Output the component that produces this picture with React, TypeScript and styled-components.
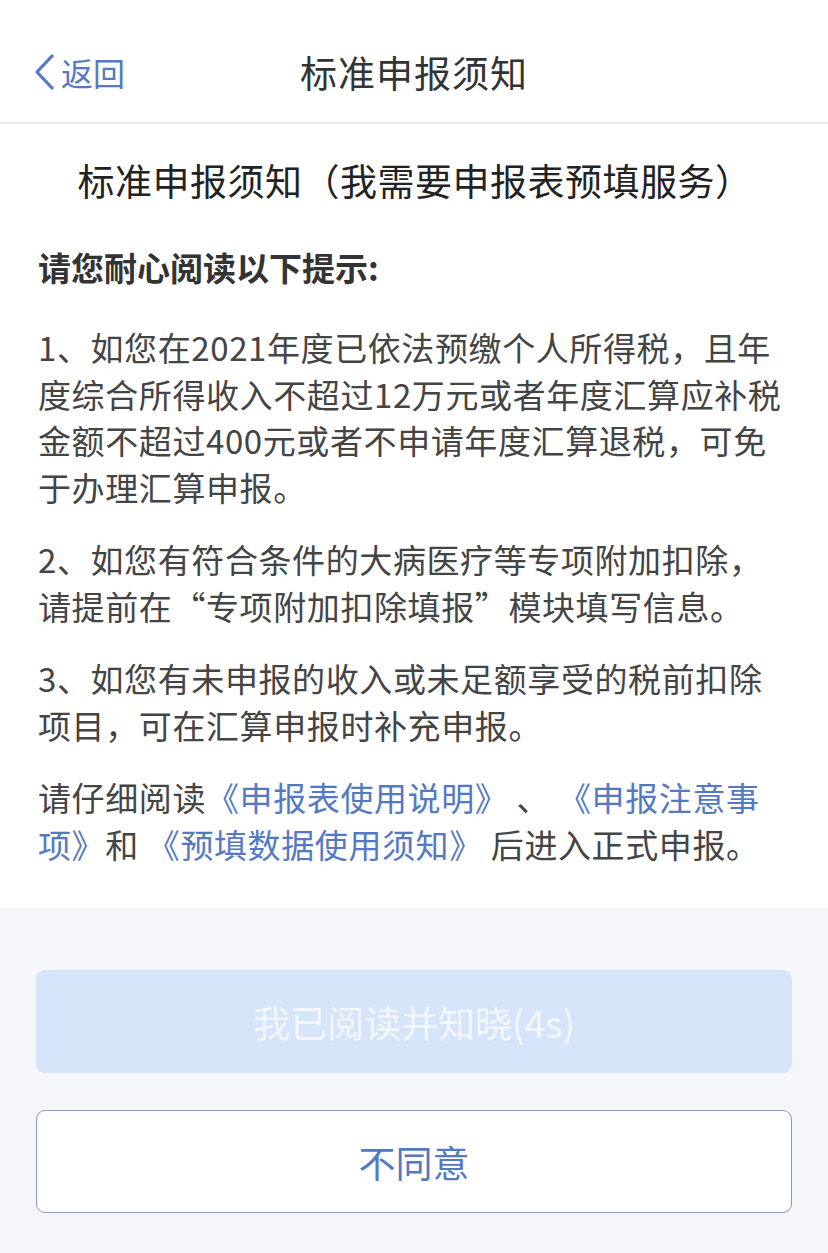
import React from "react";
import styled, { createGlobalStyle } from "styled-components";

const BLUE = "#5479c2";
const TEXT = "#444";

const GlobalStyle = createGlobalStyle`
    html, body {
        margin: 0;
        padding: 0;
        background: #f4f6f9;
    }
    body {
        font-family: "Noto Sans CJK SC", "Noto Sans", sans-serif;
        -webkit-font-smoothing: antialiased;
    }
`;

const Page = styled.div`
    width: 828px;
    min-height: 1253px;
    display: flex;
    flex-direction: column;
    background: #f4f6f9;
`;

const NavBar = styled.div`
    height: 98px;
    padding-top: 24px;
    display: grid;
    grid-template-columns: 1fr auto 1fr;
    align-items: center;
    background: #fff;
    border-bottom: 2px solid #e9e9ec;
    box-sizing: content-box;
`;

const BackButton = styled.div`
    display: flex;
    align-items: center;
    gap: 6px;
    padding-left: 33px;
    color: ${BLUE};
    font-size: 32px;
    line-height: 1;
    padding-bottom: 2px;
`;

const NavTitle = styled.div`
    font-size: 37px;
    color: #333;
    letter-spacing: 1px;
    padding-bottom: 2px;
`;

const Content = styled.div`
    background: #fff;
    padding: 31px 36px 41px 38px;
    display: flex;
    flex-direction: column;
`;

const DocTitle = styled.h1`
    margin: 0 0 39px;
    font-size: 37px;
    font-weight: 400;
    line-height: 50px;
    color: #222;
    text-align: center;
    letter-spacing: 0.5px;
`;

const Heading = styled.h2`
    margin: 0 0 34px;
    font-size: 33px;
    font-weight: 700;
    line-height: 46px;
    color: #333;
`;

const Paragraph = styled.p`
    margin: 0 0 26px;
    font-size: 33px;
    line-height: 46.5px;
    color: ${TEXT};
    letter-spacing: 0.6px;
    white-space: nowrap;

    &:last-child {
        margin-bottom: 0;
    }
`;

const DocLink = styled.span`
    color: ${BLUE};
`;

const Footer = styled.div`
    flex: 1;
    display: flex;
    flex-direction: column;
    gap: 37px;
    padding: 62px 36px 41px;
`;

const ActionButton = styled.button<{ $variant: "primary" | "outline" }>`
    height: 103px;
    border-radius: 9px;
    font-family: inherit;
    font-size: 37px;
    cursor: pointer;
    background: ${(p) => (p.$variant === "primary" ? "#d5e4f8" : "#fff")};
    color: ${(p) => (p.$variant === "primary" ? "#f3f7fd" : BLUE)};
    border: ${(p) => (p.$variant === "primary" ? "none" : "1.5px solid #8d9bb6")};
`;

const ChevronLeft = () => (
    <svg width="22" height="36" viewBox="0 0 22 36" fill="none">
        <polyline
            points="19,2 4,18 19,34"
            stroke={BLUE}
            strokeWidth="3.2"
            strokeLinecap="round"
            strokeLinejoin="round"
        />
    </svg>
);

export default function App() {
    return (
        <>
            <GlobalStyle />
            <Page>
                <NavBar>
                    <BackButton>
                        <ChevronLeft />
                        <span>返回</span>
                    </BackButton>
                    <NavTitle>标准申报须知</NavTitle>
                    <div />
                </NavBar>
                <Content>
                    <DocTitle>标准申报须知（我需要申报表预填服务）</DocTitle>
                    <Heading>请您耐心阅读以下提示:</Heading>
                    <Paragraph>
                        1、如您在2021年度已依法预缴个人所得税，且年
                        <br />
                        度综合所得收入不超过12万元或者年度汇算应补税
                        <br />
                        金额不超过400元或者不申请年度汇算退税，可免
                        <br />
                        于办理汇算申报。
                    </Paragraph>
                    <Paragraph>
                        2、如您有符合条件的大病医疗等专项附加扣除，
                        <br />
                        请提前在“专项附加扣除填报”模块填写信息。
                    </Paragraph>
                    <Paragraph>
                        3、如您有未申报的收入或未足额享受的税前扣除
                        <br />
                        项目，可在汇算申报时补充申报。
                    </Paragraph>
                    <Paragraph>
                        请仔细阅读<DocLink>《申报表使用说明》</DocLink> 、 <DocLink>《申报注意事</DocLink>
                        <br />
                        <DocLink>项》</DocLink>和 <DocLink>《预填数据使用须知》</DocLink> 后进入正式申报。
                    </Paragraph>
                </Content>
                <Footer>
                    <ActionButton $variant="primary">我已阅读并知晓(4s)</ActionButton>
                    <ActionButton $variant="outline">不同意</ActionButton>
                </Footer>
            </Page>
        </>
    );
}
